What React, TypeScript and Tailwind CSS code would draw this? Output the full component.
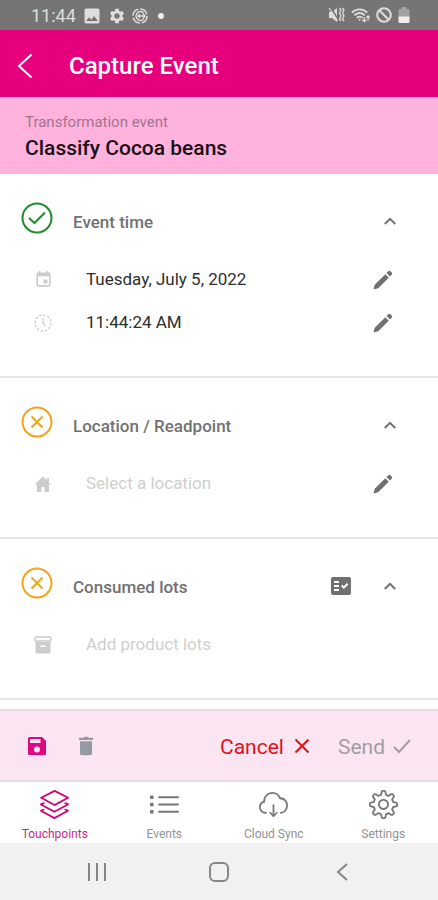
import { useState } from "react";
import type { ReactNode } from "react";
import { MdEvent, MdFactCheck, MdImage, MdSettings } from "react-icons/md";
import { SlCloudDownload, SlLayers, SlList, SlSettings } from "react-icons/sl";

const tabs = [
  { label: "Touchpoints", icon: SlLayers },
  { label: "Events", icon: SlList },
  { label: "Cloud Sync", icon: SlCloudDownload },
  { label: "Settings", icon: SlSettings },
];

function StatusBar() {
  return (
    <div className="flex h-[30px] items-center justify-between bg-[#757575] pr-7 pl-[31px] text-[#dedede]">
      <div className="flex items-center gap-1.5 pt-0.5">
        <span className="text-lg">11:44</span>
        <MdImage size={20} />
        <MdSettings size={18} />
        <svg width="16" height="16" viewBox="0 0 16 16" fill="none" stroke="currentColor" strokeWidth="1.5">
          <circle cx="8" cy="8" r="7" strokeDasharray="9 2" />
          <path d="M11.5 4.8A4.4 4.4 0 1 0 11.5 11.2" />
          <path d="M6 8h6M8 6.2 6 8l2 1.8M11 5.5 13 8l-2 2.5" />
        </svg>
        <span className="ml-1 h-1.5 w-1.5 rounded-full bg-[#eeeeee]" />
      </div>
      <div className="flex items-center gap-1.5">
        <svg width="17" height="16" viewBox="0 0 17 16" fill="currentColor">
          <path d="M1 5h3l5-4v14l-5-4H1z" />
          <path d="m2.5 0 8 13" stroke="#757575" strokeWidth="1.5" />
          <path d="m1 1 8.5 13" stroke="currentColor" strokeWidth="1.2" />
          <path
            d="m11.5 1 1.5 2-1.5 3L13 9l-1.5 3 1.5 2M14.5 1 16 3l-1.5 3L16 9l-1.5 3 1.5 2"
            fill="none"
            stroke="currentColor"
            strokeWidth="1.3"
          />
        </svg>
        <svg width="19" height="16" viewBox="0 0 20 16" fill="none" stroke="currentColor" strokeWidth="1.9">
          <path d="M1 5.5a11 11 0 0 1 16 0M3.5 8.3a7.5 7.5 0 0 1 11 0M6 11a4 4 0 0 1 6 0" />
          <circle cx="9" cy="13" r="1" fill="currentColor" stroke="none" />
          <path d="M14 10v5m-2-2 2 2 2-2M18 14V9m-2 2 2-2 2 2" strokeWidth="1.3" />
        </svg>
        <svg width="16" height="16" viewBox="0 0 16 16" fill="none" stroke="currentColor" strokeWidth="2">
          <circle cx="8" cy="8" r="6.8" />
          <path d="m3.3 3.3 9.4 9.4" />
        </svg>
        <svg width="12" height="16" viewBox="0 0 12 16">
          <path d="M3.5 0h5v2H10a1.5 1.5 0 0 1 1.5 1.5V10H.5V3.5A1.5 1.5 0 0 1 2 2h1.5z" fill="#a2a2a2" />
          <path d="M.5 9.500h11v5A1.5 1.5 0 0 1 10 16H2a1.5 1.5 0 0 1-1.5-1.5z" fill="#eeeeee" />
        </svg>
      </div>
    </div>
  );
}

function StateIcon({ done }: { done?: boolean }) {
  return (
    <svg
      width="32"
      height="32"
      viewBox="0 0 32 32"
      fill="none"
      strokeWidth="2"
      className={done ? "shrink-0 stroke-[#218a2b]" : "shrink-0 stroke-[#f5a31a]"}
    >
      <circle cx="16" cy="16" r="14.5" />
      <path d={done ? "m8 16 5.5 5L24 10.5" : "m10.5 10.5 11 11m0-11-11 11"} />
    </svg>
  );
}

function ClockIcon() {
  return (
    <svg width="18" height="18" viewBox="0 0 18 18" fill="none" stroke="currentColor">
      <circle cx="9" cy="9" r="8" strokeWidth="1.5" strokeDasharray="2.2 1.99" />
      <path d="M9 4v5l2.5 3" strokeWidth="1.2" />
    </svg>
  );
}

function HomeIcon() {
  return (
    <svg width="18" height="18" viewBox="0 0 18 18" fill="currentColor">
      <path d="M9 1.500.5 9.500H3V17h4.500v-5h3v5H15V9.500h2.500L15 7.200V3h-2v2.300z" />
    </svg>
  );
}

function ArchiveIcon() {
  return (
    <svg width="18" height="18" viewBox="0 0 18 18" fill="currentColor">
      <rect x="1" y="1" width="16" height="4" rx="1" fill="none" stroke="currentColor" strokeWidth="1.5" />
      <path d="M1.5 6h15v10a1.5 1.5 0 0 1-1.5 1.5H3A1.5 1.5 0 0 1 1.5 16z" />
      <path d="M6.5 9.500h5V11h-5z" fill="white" />
    </svg>
  );
}

function PencilIcon() {
  return (
    <svg width="20" height="20" viewBox="0 0 20 20" fill="currentColor">
      <path d="m12.3 4.2 3.5 3.5L5.2 18.3l-3.7 1a.6.6 0 0 1-.8-.8l1-3.7z" />
      <path d="m13.5 3 1.8-1.7a1.6 1.6 0 0 1 2.2 0l1.2 1.2a1.6 1.6 0 0 1 0 2.2L17 6.5z" />
    </svg>
  );
}

function SaveIcon() {
  return (
    <svg width="20" height="20" viewBox="0 0 20 20" fill="currentColor">
      <path d="M2.5 1H15l4 4v12.5a1.5 1.5 0 0 1-1.5 1.5h-15A1.5 1.5 0 0 1 1 17.5v-15A1.5 1.5 0 0 1 2.5 1z" />
      <path d="M3 3h10.500v4H3z" fill="#fce5f2" />
      <circle cx="10" cy="13.5" r="3" fill="#fce5f2" />
    </svg>
  );
}

function TrashIcon() {
  return (
    <svg width="16" height="20" viewBox="0 0 16 20" fill="currentColor">
      <path d="M1 1.800h4.500l1-1h3l1 1H15V4H1z" />
      <path d="M2 5.200h12v12.300a1.800 1.800 0 0 1-1.800 1.800H3.800A1.800 1.800 0 0 1 2 17.500z" />
    </svg>
  );
}

type SectionProps = {
  title: string;
  done?: boolean;
  action?: ReactNode;
  children: ReactNode;
};

function Section({ title, done, action, children }: SectionProps) {
  const [open, setOpen] = useState(true);

  return (
    <section className="border-b-2 border-[#e6e6e6] pt-7 pb-8">
      <div className="flex h-8 items-center pr-9 pl-[21px]">
        <StateIcon done={done} />
        <h2 className="ml-5 flex-1 pt-2.5 text-[17px] font-medium text-[#717171]">{title}</h2>
        <div className="flex items-center pt-1.5">
          {action}
          <button type="button" aria-label={`Toggle ${title}`} onClick={() => setOpen(!open)} className="p-1.5">
            <svg
              width="12"
              height="8"
              viewBox="0 0 12 8"
              fill="none"
              stroke="#707070"
              strokeWidth="2"
              className={open ? "" : "rotate-180"}
            >
              <path d="M.8 7 6 1.8 11.2 7" />
            </svg>
          </button>
        </div>
      </div>
      {open && <div className="pt-6">{children}</div>}
    </section>
  );
}

type RowProps = {
  icon: ReactNode;
  text: string;
  empty?: boolean;
  editable?: boolean;
};

function Row({ icon, text, empty, editable }: RowProps) {
  return (
    <div className="flex h-[43px] items-center pr-[45px] pl-[34px]">
      <span className="flex w-[52px] text-[#cccccc]">{icon}</span>
      <span className={empty ? "flex-1 text-[17px] text-[#cfcfcf]" : "flex-1 text-[17px] text-[#2e2e2e]"}>{text}</span>
      {editable && (
        <button type="button" aria-label={`Edit ${text}`} className="text-[#707070]">
          <PencilIcon />
        </button>
      )}
    </div>
  );
}

export default function App() {
  const [tab, setTab] = useState("Touchpoints");

  return (
    <div className="flex min-h-screen flex-col bg-white font-[Roboto,sans-serif]">
      <StatusBar />

      <header className="flex h-[67px] items-center bg-[#e6007e] pt-1 pl-[17px] text-white">
        <button type="button" aria-label="Back">
          <svg width="16" height="26" viewBox="0 0 16 26" fill="none" stroke="currentColor" strokeWidth="2">
            <path d="M14.5 1.5 2 13l12.5 11.5" />
          </svg>
        </button>
        <h1 className="ml-9 text-2xl font-medium">Capture Event</h1>
      </header>

      <div className="flex h-[77px] flex-col justify-center bg-[#ffb2dc] px-[25px]">
        <p className="text-[15px] leading-6 text-[#a07590]">Transformation event</p>
        <p className="text-[21px] leading-7 font-medium text-[#181018]">Classify Cocoa beans</p>
      </div>

      <main className="flex-1">
        <Section title="Event time" done>
          <Row icon={<MdEvent size={19} />} text="Tuesday, July 5, 2022" editable />
          <Row icon={<ClockIcon />} text="11:44:24 AM" editable />
        </Section>
        <Section title="Location / Readpoint">
          <Row icon={<HomeIcon />} text="Select a location" empty editable />
        </Section>
        <Section
          title="Consumed lots"
          action={
            <button type="button" aria-label="Check lots" className="mr-[25px] text-[#707070]">
              <MdFactCheck size={24} />
            </button>
          }
        >
          <Row icon={<ArchiveIcon />} text="Add product lots" empty />
        </Section>
      </main>

      <div className="flex h-[73px] items-center border-y-2 border-[#eadbe3] bg-[#fce5f2] px-[27px]">
        <button type="button" aria-label="Save" className="text-[#e0087e]">
          <SaveIcon />
        </button>
        <button type="button" aria-label="Delete" className="ml-[31px] text-[#929ba3]">
          <TrashIcon />
        </button>
        <button type="button" className="ml-auto flex items-center gap-2.5 text-[21px] text-[#e01217]">
          <span className="pt-1">Cancel</span>
          <svg width="16" height="16" viewBox="0 0 16 16" fill="none" stroke="currentColor" strokeWidth="2">
            <path d="m1.5 1.5 13 13m0-13-13 13" />
          </svg>
        </button>
        <button type="button" className="ml-7 flex items-center gap-2 text-[21px] text-[#a39ca2]">
          <span className="pt-1">Send</span>
          <svg width="18" height="16" viewBox="0 0 18 16" fill="none" stroke="currentColor" strokeWidth="2">
            <path d="m1 9 5 5L17 2" />
          </svg>
        </button>
      </div>

      <nav className="grid h-[61px] grid-cols-4">
        {tabs.map(({ label, icon: Icon }) => (
          <button
            key={label}
            type="button"
            onClick={() => setTab(label)}
            className={
              tab === label
                ? "flex flex-col items-center gap-[7px] pt-2 text-xs text-[#c9287f]"
                : "flex flex-col items-center gap-[7px] pt-2 text-xs text-[#929292]"
            }
          >
            <Icon size={29} className={tab === label ? "text-[#d00878]" : "text-[#777777]"} />
            {label}
          </button>
        ))}
      </nav>

      <div className="flex h-[57px] items-center justify-around bg-[#f1f1f1] px-9 text-[#858585]">
        <button type="button" aria-label="Recent apps">
          <svg width="20" height="20" viewBox="0 0 20 20" fill="none" stroke="currentColor" strokeWidth="2">
            <path d="M2 1v18M10 1v18M18 1v18" />
          </svg>
        </button>
        <button type="button" aria-label="Home">
          <svg width="20" height="20" viewBox="0 0 20 20" fill="none" stroke="currentColor" strokeWidth="2">
            <rect x="1" y="1" width="18" height="18" rx="5" />
          </svg>
        </button>
        <button type="button" aria-label="Go back">
          <svg width="20" height="20" viewBox="0 0 20 20" fill="none" stroke="currentColor" strokeWidth="2">
            <path d="m16 2-9 8 9 8" />
          </svg>
        </button>
      </div>
    </div>
  );
}
